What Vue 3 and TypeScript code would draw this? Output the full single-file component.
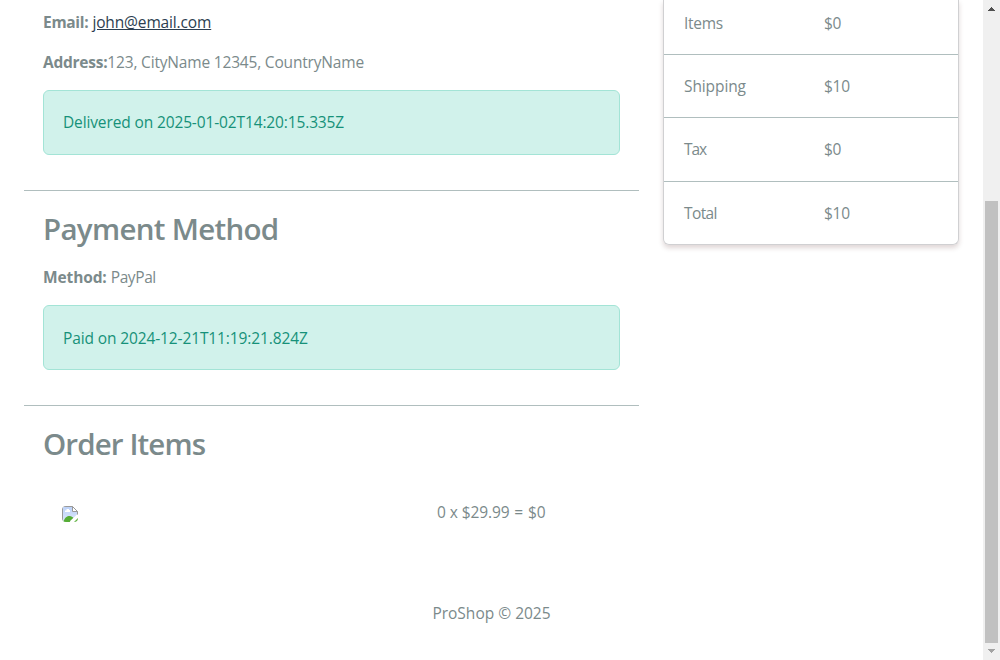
<script setup lang="ts">
interface SummaryRow {
  label: string
  value: string
}

const summary: SummaryRow[] = [
  { label: 'Items', value: '$0' },
  { label: 'Shipping', value: '$10' },
  { label: 'Tax', value: '$0' },
  { label: 'Total', value: '$10' },
]
</script>

<template>
  <div class="page">
    <div class="content">
      <div class="columns">
        <main class="details">
          <section class="block shipping">
            <p class="line"><strong class="s-email">Email:</strong>&nbsp;<a class="mail">john@email.com</a></p>
            <p class="line"><strong class="s-address">Address:</strong><span class="address">123, CityName 12345, CountryName</span></p>
            <div class="alert alert-delivered">Delivered on 2025-01-02T14:20:15.335Z</div>
          </section>
          <section class="block payment">
            <h2>Payment Method</h2>
            <p class="line"><strong class="s-method">Method:</strong>&nbsp;<span class="paypal">PayPal</span></p>
            <div class="alert alert-paid">Paid on 2024-12-21T11:19:21.824Z</div>
          </section>
          <section class="block order">
            <h2>Order Items</h2>
            <div class="item">
              <svg class="missing" viewBox="0 0 16 16" width="16" height="16">
                <defs>
                  <linearGradient id="sky" x1="0" y1="0" x2="0" y2="1">
                    <stop offset="0" stop-color="#bdd2f8" />
                    <stop offset="1" stop-color="#dce7fb" />
                  </linearGradient>
                  <clipPath id="frame"><rect width="16" height="16" rx="4" /></clipPath>
                </defs>
                <g clip-path="url(#frame)">
                  <path d="M0 0H11L16 5V9L9 16H0Z" fill="#fff" />
                  <path d="M1 1H10V5.5H15V9L8 16H1Z" fill="url(#sky)" />
                  <path d="M3 6V4.5H4.5V3H7V4H8V6Z" fill="#fff" />
                  <path d="M1 16C3 11.5 5 10 7.5 10C9.5 10 10.5 11 11.5 12L8 16Z" fill="#56ad35" />
                  <path d="M12 16L16 12V16Z" fill="#63b344" />
                  <path d="M0.5 16V0.5H10.5L15.5 5.5V9" fill="none" stroke="#999" />
                  <path d="M10.5 .5V5.5H15.5Z" fill="#fff" stroke="#999" />
                  <path d="M8.5 16L16 9" stroke="#fff" stroke-width="2" />
                </g>
              </svg>
              <span class="calc">0 x $29.99 <span class="equals">=</span> $0</span>
            </div>
          </section>
        </main>
        <aside class="card">
          <div v-for="row in summary" :key="row.label" class="row">
            <span :class="'label-' + row.label.toLowerCase()">{{ row.label }}</span>
            <span class="value">{{ row.value }}</span>
          </div>
        </aside>
      </div>
      <footer>ProShop © 2025</footer>
    </div>
    <div class="scrollbar">
      <svg width="17" height="17" shape-rendering="crispEdges"><path d="M8 7H9V8H10V9H11V10H12V11H5V10H6V9H7V8H8Z" fill="#505050" /></svg>
      <div class="thumb"></div>
      <svg width="17" height="17" shape-rendering="crispEdges"><path d="M5 6H12V7H11V8H10V9H9V10H8V9H7V8H6V7H5Z" fill="#a3a3a3" /></svg>
    </div>
  </div>
</template>

<style>
body {
  margin: 0;
  overflow: hidden;
  background: #fff;
}
</style>

<style scoped>
.page {
  display: flex;
  width: 1000px;
  height: 660px;
  overflow: hidden;
  color: #7b8a8b;
  font: 15.5px/24px "Open Sans", "Noto Sans", sans-serif;
}
.content {
  width: 983px;
}
.columns {
  display: flex;
  align-items: flex-start;
  gap: 24px;
  height: 601px;
  padding-left: 24px;
}
.details {
  width: 615px;
}
.block {
  box-sizing: border-box;
  padding: 0 19px;
  border-bottom: 1px solid #b0bebe;
}
.shipping {
  height: 191px;
  padding-top: 10px;
}
.payment {
  height: 215px;
  padding-top: 19px;
}
.order {
  padding-top: 19px;
  border-bottom: 0;
}
.line {
  margin: 0 0 16px;
  white-space: nowrap;
}
h2 {
  margin: 0 0 17px;
  font-size: 29.5px;
  font-weight: 600;
  line-height: 38px;
  letter-spacing: -0.7px;
  white-space: nowrap;
}
.order h2 {
  letter-spacing: -0.88px;
}
.s-email {
  letter-spacing: -0.3px;
}
.s-address {
  letter-spacing: -0.25px;
}
.s-method {
  letter-spacing: -0.12px;
}
.address {
  letter-spacing: -0.18px;
}
.paypal {
  letter-spacing: -0.4px;
}
.alert {
  box-sizing: border-box;
  height: 65px;
  padding: 19px;
  border: 1px solid #a3e4d6;
  border-radius: 6px;
  background: #d1f2eb;
  color: #169179;
}
.alert-delivered {
  letter-spacing: -0.13px;
}
.alert-paid {
  padding-top: 20px;
  letter-spacing: -0.12px;
}
.mail {
  color: #2c3e50;
  letter-spacing: -0.14px;
  text-decoration: underline;
  text-underline-offset: 1px;
}
.item {
  display: grid;
  grid-template-columns: 375px 1fr;
  margin-top: 37px;
  padding-left: 19px;
}
.missing {
  margin-top: 6px;
}
.calc {
  letter-spacing: -0.1px;
}
.equals {
  margin: 0 1px;
}
.card {
  box-sizing: border-box;
  width: 296px;
  height: 245px;
  border: 1px solid #d0d0d2;
  border-top: 0;
  border-radius: 0 0 6px 6px;
  box-shadow: 0 3px 5px rgba(80, 30, 30, 0.18);
}
.row {
  box-sizing: border-box;
  display: grid;
  grid-template-columns: 140px 1fr;
  height: 63.33px;
  padding: 19px 20px 0;
  border-bottom: 1px solid #b0bebe;
}
.row:first-child {
  height: 55px;
  padding-top: 11px;
}
.row:last-child {
  border-bottom: 0;
}
.label-items {
  letter-spacing: -0.3px;
}
.label-shipping {
  letter-spacing: -0.1px;
}
.label-tax {
  letter-spacing: -1.1px;
}
.label-total {
  letter-spacing: -0.6px;
}
.value {
  letter-spacing: -0.3px;
}
footer {
  text-align: center;
}
.scrollbar {
  display: flex;
  flex-direction: column;
  justify-content: space-between;
  width: 17px;
  background: #f0f0f0;
}
.thumb {
  width: 13px;
  height: 442px;
  margin: 184px 0 0 2px;
  background: #c1c1c1;
}
</style>
